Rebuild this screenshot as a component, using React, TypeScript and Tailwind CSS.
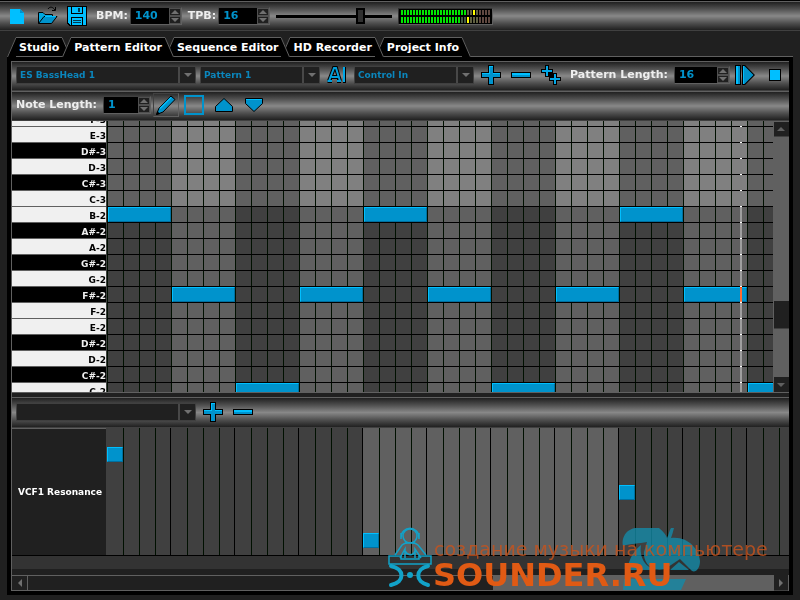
import { ReactNode } from 'react';

const BEATS = Array.from({ length: 64 }, (_, i) => i);

type Key = { name: string; notes?: number[] };

// notes are start steps, every note is one beat (four steps) long
const KEYS: Key[] = [
  { name: 'F-3' },
  { name: 'E-3' },
  { name: 'D#-3' },
  { name: 'D-3' },
  { name: 'C#-3' },
  { name: 'C-3' },
  { name: 'B-2', notes: [0, 16, 32] },
  { name: 'A#-2' },
  { name: 'A-2' },
  { name: 'G#-2' },
  { name: 'G-2' },
  { name: 'F#-2', notes: [4, 12, 20, 28, 36] },
  { name: 'F-2' },
  { name: 'E-2' },
  { name: 'D#-2' },
  { name: 'D-2' },
  { name: 'C#-2' },
  { name: 'C-2', notes: [8, 24, 40] },
];

const POINTS = [
  { step: 0, top: 19 },
  { step: 16, top: 105 },
  { step: 32, top: 57 },
];

const STEP = 16;

function Toolbar({ children, className = '' }: { children?: ReactNode; className?: string }) {
  return (
    <div
      className={`flex flex-shrink-0 items-center border-t border-b border-t-[#606060] border-b-[#404040] bg-[linear-gradient(#202020,#505050_25%,#888888_50%,#505050_75%,#202020)] ${className}`}
    >
      {children}
    </div>
  );
}

function IconButton({ label, children, className = '' }: { label: string; children: ReactNode; className?: string }) {
  return (
    <button type="button" aria-label={label} className={`flex h-6 w-[22px] flex-shrink-0 items-center justify-center ${className}`}>
      {children}
    </button>
  );
}

function Spinner({ id, label, value, width, gap }: { id: string; label: string; value: string; width: string; gap: string }) {
  return (
    <div className={`flex flex-shrink-0 items-center ${gap}`}>
      <label htmlFor={id} className="whitespace-nowrap text-[11px] leading-4 text-[#eeeeee]">
        {label}
      </label>
      <div className={`flex h-[18px] border border-[#404040] border-r-[#606060] border-b-[#606060] bg-black ${width}`}>
        <input id={id} defaultValue={value} inputMode="numeric" className="h-4 min-w-0 flex-1 bg-black pl-1 text-[11px] leading-4 text-[#0093cc] outline-none" />
        <div className="flex w-3 flex-col bg-[#404040]">
          <button type="button" aria-label={`${label} up`} className="flex h-2 items-center justify-center border border-[#505050] bg-[#202020]">
            <svg width="8" height="4" viewBox="0 0 8 4"><path d="M4 0L8 4H0z" fill="#707070" /></svg>
          </button>
          <button type="button" aria-label={`${label} down`} className="flex h-2 items-center justify-center border border-[#505050] bg-[#202020]">
            <svg width="8" height="4" viewBox="0 0 8 4"><path d="M0 0H8L4 4z" fill="#707070" /></svg>
          </button>
        </div>
      </div>
    </div>
  );
}

function Combo({ label, value, width }: { label: string; value: string; width: string }) {
  return (
    <div className={`flex h-[18px] flex-shrink-0 border border-[#404040] bg-[#202020] ${width}`}>
      <select aria-label={label} defaultValue={value} className="h-4 min-w-0 flex-1 appearance-none bg-[#202020] pl-[3px] text-[9px] leading-4 text-[#0b86bd] outline-none">
        <option>{value}</option>
      </select>
      <span className="flex w-[17px] items-center justify-center border-l-2 border-[#484848]">
        <svg width="8" height="4" viewBox="0 0 8 4"><path d="M0 0H8L4 4z" fill="#707070" /></svg>
      </span>
    </div>
  );
}

function PlusIcon() {
  return (
    <svg width="20" height="20" viewBox="0 0 20 20" shapeRendering="crispEdges">
      <path d="M7 0H13V7H20V13H13V20H7V13H0V7H7z" fill="#000" />
      <path d="M8 1H12V8H19V12H12V19H8V12H1V8H8z" fill="#0093cc" />
      <path d="M8 1H12V2H9V9H1V8H8zM12 8H19V9H12z" fill="#00bfff" />
    </svg>
  );
}

function MinusIcon() {
  return (
    <svg width="20" height="6" viewBox="0 0 20 6" shapeRendering="crispEdges">
      <path d="M0 0H20V6H0z" fill="#000" />
      <path d="M1 1H19V5H1z" fill="#0093cc" />
      <path d="M1 1H19V3H1z" fill="#00bfff" />
    </svg>
  );
}

function Tab({ children, className, selected = false }: { children: string; className: string; selected?: boolean }) {
  return (
    <button type="button" role="tab" aria-selected={selected} className={`relative flex h-5 flex-shrink-0 ${className}`}>
      <svg width="9" height="20" viewBox="0 0 9 20">
        <path d="M9 0V20H0z" fill="#000" />
        <path d="M9 0.5L0.5 20" stroke="#606060" fill="none" />
      </svg>
      <span className={`h-5 border-t border-b border-t-[#606060] bg-black px-[3px] text-[11px] leading-5 whitespace-nowrap text-white ${selected ? 'border-b-black' : 'border-b-[#606060]'}`}>
        {children}
      </span>
      <svg width="9" height="20" viewBox="0 0 9 20">
        <path d="M0 0V20H9z" fill="#000" />
        <path d="M0 0.5L8.5 20" stroke="#606060" fill="none" />
      </svg>
    </button>
  );
}

function Meter() {
  const rows = [
    { level: 22, peak: 24 },
    { level: 20, peak: 22 },
  ];
  return (
    <div className="ml-1.5 flex h-[17px] flex-col gap-0.5 border border-[#303030] border-r-[#606060] border-b-[#606060] bg-black px-0.5 py-px">
      {rows.map((row) => (
        <div key={row.level} className="flex h-[6px] gap-px">
          {Array.from({ length: 30 }, (_, i) => {
            const color =
              i < row.level ? 'bg-[#00e800]' : i === row.peak ? 'bg-[#ffff00]' : i < 22 ? 'bg-[#405840]' : i < 26 ? 'bg-[#606040]' : 'bg-[#604840]';
            return <span key={i} className={`w-0.5 ${color}`} />;
          })}
        </div>
      ))}
    </div>
  );
}

function PianoRoll() {
  return (
    <div className="flex min-h-0 flex-1 bg-[#606060]">
      <div className="flex min-w-0 flex-1 overflow-hidden">
        <div className="-mt-2.5 w-[95px] flex-shrink-0 border-r border-[#404040]">
          {KEYS.map(({ name }) => (
            <div
              key={name}
              className={`h-4 border-b border-[#606060] pt-px text-right text-[9px] leading-4 ${name.includes('#') ? 'bg-black text-[#f0f0f0]' : 'bg-[#f0f0f0] text-black'}`}
            >
              {name}
            </div>
          ))}
        </div>
        <div className="relative min-w-0 flex-1 overflow-hidden">
          <div className="-mt-2.5">
            {KEYS.map(({ name, notes = [] }) => {
              const high = name.endsWith('3');
              return (
                <div key={name} className="relative flex h-4">
                  {BEATS.map((beat) => (
                    <div
                      key={beat}
                      className={`flex w-16 flex-shrink-0 border-b border-black ${
                        beat % 2 ? (high ? 'bg-[#808080]' : 'bg-[#606060]') : high ? 'bg-[#606060]' : 'bg-[#404040]'
                      }`}
                    >
                      <span className="w-4 border-l border-[#001000]" />
                      <span className="w-4 border-l border-[#001000]" />
                      <span className="w-4 border-l border-[#001000]" />
                      <span className="w-4 border-l border-[#001000]" />
                    </div>
                  ))}
                  {notes.map((step) => (
                    <div
                      key={step}
                      className="absolute top-0 ml-px h-[15px] w-[63px] border border-t-[#00bfff] border-r-[#0070a0] border-b-[#0070a0] border-l-[#00bfff] bg-[#0093cc]"
                      style={{ left: step * STEP }}
                    />
                  ))}
                </div>
              );
            })}
          </div>
          {/* Playhead inverts whatever it crosses */}
          <div className="absolute top-0 bottom-0 left-[633px] w-0.5 bg-white mix-blend-difference" />
        </div>
      </div>
      <div className="flex w-4 flex-shrink-0 flex-col items-center pt-px">
        <button type="button" aria-label="Scroll up" className="flex h-[15px] w-[15px] items-center justify-center border-b border-[#404040] bg-[#202020]">
          <svg width="8" height="4" viewBox="0 0 8 4"><path d="M4 0L8 4H0z" fill="#606060" /></svg>
        </button>
        <span className="flex-[164]" />
        <span className="h-7 w-[15px] border-b border-[#404040] bg-[#202020]" />
        <span className="flex-[48]" />
        <button type="button" aria-label="Scroll down" className="flex h-[15px] w-[15px] items-center justify-center bg-[#202020]">
          <svg width="8" height="4" viewBox="0 0 8 4"><path d="M0 0H8L4 4z" fill="#606060" /></svg>
        </button>
      </div>
    </div>
  );
}

function Automation() {
  return (
    <div className="flex h-32 flex-shrink-0 border-b border-black">
      <div className="flex w-[94px] flex-shrink-0 items-center border-t border-[#606060] bg-[#202020] pt-0.5 pl-1.5 text-[9px] whitespace-nowrap text-white">
        VCF1 Resonance
      </div>
      <div className="relative flex min-w-0 flex-1 overflow-hidden bg-[#404040] pl-px">
        {BEATS.map((beat) => (
          <div key={beat} className={`flex w-16 flex-shrink-0 ${Math.floor(beat / 4) % 2 ? 'bg-[#606060]' : 'bg-[#404040]'}`}>
            <span className="w-[17px] border-r border-[#001000]" />
            <span className="w-4 border-r border-[#001000]" />
            <span className="w-4 border-r border-[#001000]" />
            <span className="w-[15px] border-r border-black" />
          </div>
        ))}
        {POINTS.map(({ step, top }) => (
          <div
            key={step}
            className="absolute ml-px h-[15px] w-4 border border-t-[#00bfff] border-r-[#0070a0] border-b-[#0070a0] border-l-[#00bfff] bg-[#0093cc]"
            style={{ left: step * STEP, top }}
          />
        ))}
      </div>
    </div>
  );
}

function Watermark() {
  return (
    <div className="pointer-events-none absolute right-6 bottom-[9px] h-16 w-[388px]">
      <svg className="absolute top-0 right-0" width="388" height="64" viewBox="0 0 388 64" fill="none">
        {/* Fruit */}
        <g fill="#148aa8" fillOpacity="0.8">
          <path d="M235 19C233 9 240 1 249 1H271C275 4 278 8 279 11C281 7 281 4 283 1H286C285 5 284 8 283 11C300 9 311 22 312 34C312 41 308 46 304 44L292 32L277 42C262 46 255 34 256 25L259 15C251 17 243 16 235 19z" />
          <path d="M239 43C241 33 245 24 253 18C251 31 258 41 269 43zM291 35L301 43H282zM236 52H298L293 63H235z" />
        </g>
        {/* DJ behind the desk */}
        <g stroke="#12a2c8" strokeWidth="1.5">
          <ellipse cx="22" cy="9" rx="7" ry="7" />
          <path d="M13 11C13 -2 31 -2 31 11M13 6V12M31 6V12M18 15V17M26 15V17" />
          <path d="M7 28L14 18C17 15 27 15 30 18L38 28M12 31L17 22V31M33 31L27 22V31M17 24C20 29 25 29 27 24" />
          <path d="M1 29H13V32H31V29H43V37H1z" />
        </g>
        <g stroke="#12a2c8" strokeWidth="4" strokeLinecap="round">
          <path d="M3 39C17 42 17 55 3 58M40 39C27 42 27 55 40 58" />
        </g>
        <circle cx="22" cy="48" r="3" fill="#12a2c8" />
      </svg>
      <div className="absolute right-0 bottom-8 left-[46px] text-[19px] leading-5 font-normal whitespace-nowrap text-[#c8531c]/80">
        создание музыки на компьютере
      </div>
      <div className="absolute right-0 bottom-0 left-[45px] text-[32px] leading-8 whitespace-nowrap text-[#e05a14]">SOUNDER.RU</div>
    </div>
  );
}

export default function App() {
  return (
    <div className="relative flex h-screen flex-col overflow-hidden bg-[#202020] pb-[5px] font-['DejaVu_Sans',sans-serif] font-bold">
      {/* Transport */}
      <header className="flex-shrink-0 border-t border-black">
        <Toolbar className="h-[30px] pl-1.5">
          <div className="mr-2 flex gap-2">
            <IconButton label="New">
              <svg width="22" height="22" viewBox="0 0 22 22">
                <path d="M4 4H14L18 8V19H4z" fill="#00bfff" />
                <path d="M14 4V8H18z" fill="#0093cc" />
              </svg>
            </IconButton>
            <IconButton label="Open">
              <svg width="22" height="22" viewBox="0 0 22 22">
                <path d="M2.5 18.5V7.5H7L9 9.5H16.5V12" fill="#00a8e0" stroke="#000" />
                <path d="M2.5 18.5L8 11.5H21L15.500 18.5z" fill="#0093cc" stroke="#000" />
                <path d="M9 11.500H20" stroke="#00bfff" />
                <path d="M12 4C14 1 17 2 19 5M19.500 2V5.500H16" stroke="#000" fill="none" />
              </svg>
            </IconButton>
            <IconButton label="Save">
              <svg width="22" height="22" viewBox="0 0 22 22" shapeRendering="crispEdges">
                <path d="M1 1H21V21H3L1 19z" fill="#000" />
                <path d="M2 2H20V20H4L2 18z" fill="#00bfff" />
                <path d="M5 1H17V9H5zM5 12H17V21H5z" fill="#000" />
                <path d="M6 2H16V8H6zM6 13H16V20H6z" fill="#00bfff" />
                <path d="M12 3H14V7H12zM7 15H15V16H7zM7 17H15V18H7z" fill="#003b52" />
              </svg>
            </IconButton>
          </div>
          <div className="flex gap-1.5">
            <Spinner id="bpm" label="BPM:" value="140" width="w-[52px]" gap="gap-0.5" />
            <Spinner id="tpb" label="TPB:" value="16" width="w-[52px]" gap="gap-0.5" />
          </div>
          <input
            type="range"
            aria-label="Volume"
            defaultValue={75}
            className="ml-1.5 h-4 w-[116px] appearance-none bg-[linear-gradient(#000,#000)] bg-[length:100%_3px] bg-center bg-no-repeat [&::-webkit-slider-thumb]:h-4 [&::-webkit-slider-thumb]:w-[9px] [&::-webkit-slider-thumb]:appearance-none [&::-webkit-slider-thumb]:border-2 [&::-webkit-slider-thumb]:border-black [&::-webkit-slider-thumb]:bg-[#303030]"
          />
          <Meter />
        </Toolbar>
      </header>

      {/* Tabs */}
      <div role="tablist" className="mt-1.5 flex flex-shrink-0 pl-[7px]">
        <Tab className="z-30">Studio</Tab>
        <Tab className="z-40 -ml-[9px]" selected>Pattern Editor</Tab>
        <Tab className="z-30 -ml-[9px]">Sequence Editor</Tab>
        <Tab className="z-20 -ml-[9px]">HD Recorder</Tab>
        <Tab className="z-10 -ml-[9px]">Project Info</Tab>
        <span className="mr-[7px] -ml-2 flex-1 border-b border-[#606060]" />
      </div>

      {/* Pattern editor */}
      <main className="mr-[7px] ml-[7px] flex min-h-0 flex-1 flex-col border-4 border-black">
        <div className="flex min-h-0 flex-1 flex-col border-l border-[#606060]">
          <Toolbar className="h-[30px] pb-0.5 pl-1">
            <div className="flex gap-1">
              <Combo label="Machine" value="ES BassHead 1" width="w-[180px]" />
              <Combo label="Pattern" value="Pattern 1" width="w-[120px]" />
            </div>
            <IconButton label="Rename" className="mx-1.5">
              <svg width="20" height="18" viewBox="0 0 20 18">
                <path d="M2 15L7 2H9L13 15M4.500 11H11M0.500 15H5M10 15H14" stroke="#000" strokeWidth="4" fill="none" />
                <path d="M2 15L7 2H9L13 15M4.500 11H11M0.500 15H5M10 15H14" stroke="#009fdc" strokeWidth="2" fill="none" />
                <path d="M16 1H19V17H16z" fill="#000" />
                <path d="M16 1H18V16H16z" fill="#00a8e8" />
              </svg>
            </IconButton>
            <Combo label="Input" value="Control In" width="w-[120px]" />
            <div className="mr-2 ml-1.5 flex gap-2">
              <IconButton label="Add"><PlusIcon /></IconButton>
              <IconButton label="Remove"><MinusIcon /></IconButton>
              <IconButton label="Duplicate">
                <svg width="20" height="20" viewBox="0 0 20 20" shapeRendering="crispEdges">
                  <path d="M4 0H8V4H12V8H16V12H20V16H16V20H12V16H8V12H4V8H0V4H4z" fill="#000" />
                  <path d="M5 1H7V5H11V7H7V11H5V7H1V5H5zM13 9H15V13H19V15H15V19H13V15H9V13H13z" fill="#00a8e8" />
                </svg>
              </IconButton>
            </div>
            <Spinner id="pattern-length" label="Pattern Length:" value="16" width="w-[56px]" gap="gap-1.5" />
            <div className="ml-1 flex gap-2">
              <IconButton label="Play">
                <svg width="20" height="20" viewBox="0 0 20 20">
                  <path d="M0 0H6V20H0zM7 0H10L20 10L10 20H7z" fill="#000" />
                  <path d="M1 1H5V19H1zM8 1H9.500L18.500 10L9.500 19H8z" fill="#0093cc" />
                  <path d="M1 1H3V19H1zM8 1H9V19H8z" fill="#00bfff" />
                </svg>
              </IconButton>
              <IconButton label="Stop">
                <svg width="12" height="12" viewBox="0 0 12 12"><path d="M0 0H12V12H0z" fill="#000" /><path d="M1 1H11V11H1z" fill="#00bfff" /></svg>
              </IconButton>
            </div>
          </Toolbar>

          <Toolbar className="h-[30px] pb-0.5 pl-1">
            <Spinner id="note-length" label="Note Length:" value="1" width="w-12" gap="gap-1.5" />
            <button type="button" aria-label="Draw" className="ml-0.5 flex h-6 w-[26px] items-center justify-center border border-[#404040] border-r-[#606060] border-b-[#606060]">
              <svg width="20" height="20" viewBox="0 0 20 20">
                <path d="M0.500 19.500L3 13L15 1L19 4.500L7 17z" fill="#0093cc" stroke="#000" />
                <path d="M4 13.500L15 2.500" stroke="#00bfff" strokeWidth="1.500" />
                <path d="M0 20L1.500 16L4 19z" fill="#000" />
              </svg>
            </button>
            <div className="ml-1 flex gap-2">
              <IconButton label="Select"><span className="h-5 w-5 border-2 border-[#0093cc]" /></IconButton>
              <IconButton label="Transpose up">
                <svg width="18" height="14" viewBox="0 0 18 14"><path d="M0.500 13.500V8.500L9 0.500L17.500 8.500V13.500z" fill="#0093cc" stroke="#000" /></svg>
              </IconButton>
              <IconButton label="Transpose down">
                <svg width="18" height="14" viewBox="0 0 18 14"><path d="M0.500 0.500H17.500V5.500L9 13.500L0.500 5.500z" fill="#0093cc" stroke="#000" /><path d="M1 1.500H17" stroke="#00bfff" /></svg>
              </IconButton>
            </div>
          </Toolbar>

          <PianoRoll />

          <div className="h-[5px] flex-shrink-0 border-t border-[#606060] bg-[#202020]" />
          <Toolbar className="h-[31px] pb-0.5 pl-1">
            <Combo label="Parameter" value="" width="w-[180px]" />
            <div className="ml-1.5 flex gap-2">
              <IconButton label="Add parameter"><PlusIcon /></IconButton>
              <IconButton label="Remove parameter"><MinusIcon /></IconButton>
            </div>
          </Toolbar>

          <Automation />

          <div className="h-[13px] flex-shrink-0 bg-[#333333]" />
          <div className="mt-1.5 flex h-4 flex-shrink-0 bg-[#606060]">
            <button type="button" aria-label="Scroll left" className="flex w-[15px] items-center justify-center border-t border-b border-[#606060] bg-[#202020]">
              <svg width="4" height="8" viewBox="0 0 4 8"><path d="M4 0V8L0 4z" fill="#707070" /></svg>
            </button>
            <span className="flex-[466] border border-[#606060] bg-[#202020]" />
            <span className="flex-[281]" />
            <button type="button" aria-label="Scroll right" className="mr-px flex w-[14px] items-center justify-center border-b border-[#404040] bg-[#202020]">
              <svg width="4" height="8" viewBox="0 0 4 8"><path d="M0 0V8L4 4z" fill="#707070" /></svg>
            </button>
          </div>
        </div>
      </main>
      <Watermark />
    </div>
  );
}
